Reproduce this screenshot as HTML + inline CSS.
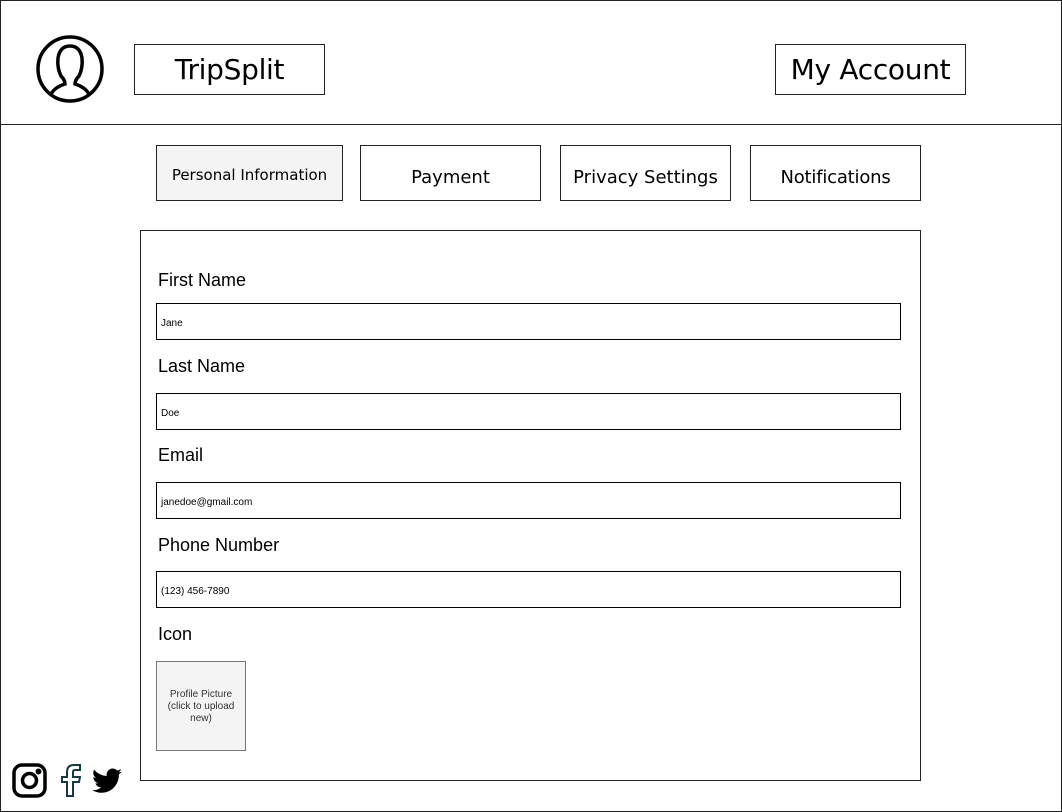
<!DOCTYPE html>
<html><head><style>
body{margin:0;width:1062px;height:812px;position:relative;background:#fff;overflow:hidden;font-family:"Liberation Sans",sans-serif}
.a{position:absolute;box-sizing:border-box;border:1.5px solid #222}
.dj{font-family:"DejaVu Sans",sans-serif;display:flex;align-items:center;justify-content:center;color:#000}
.lbl{position:absolute;font-size:18px;color:#000;left:158px}
.in{position:absolute;left:156px;width:745px;height:37px;box-sizing:border-box;border:1px solid #000;font-size:10px;padding-left:4px;padding-top:3px;display:flex;align-items:center}
</style></head><body>
<div class="a" style="left:0;top:0;width:1062px;height:812px"></div>
<div class="a" style="left:0;top:124px;width:1062px;height:0;border-width:1.5px 0 0 0"></div>
<svg style="position:absolute;left:35px;top:34px" width="70" height="70" viewBox="0 0 70 70" fill="none" stroke="#000" stroke-width="3.5">
<circle cx="35" cy="35" r="32"/>
<path d="M16 60 Q20 53 30 50 Q30 46 26 42 Q22 34 23 24 Q25 12 35 12 Q45 12 47 24 Q48 34 44 42 Q40 46 40 50 Q50 53 54 60"/>
</svg>
<div class="a dj" style="left:134px;top:44px;width:191px;height:51px;font-size:28px;letter-spacing:-0.3px">TripSplit</div>
<div class="a dj" style="left:775px;top:44px;width:191px;height:51px;font-size:28px;letter-spacing:-0.3px">My Account</div>
<div class="a dj" style="left:156px;top:145px;width:187px;height:56px;font-size:15px;background:#f4f4f4;padding-top:4px">Personal Information</div>
<div class="a dj" style="left:360px;top:145px;width:181px;height:56px;font-size:18px;padding-top:8px">Payment</div>
<div class="a dj" style="left:560px;top:145px;width:171px;height:56px;font-size:18px;padding-top:8px">Privacy Settings</div>
<div class="a dj" style="left:750px;top:145px;width:171px;height:56px;font-size:18px;padding-top:8px;letter-spacing:-0.2px">Notifications</div>
<div class="a" style="left:140px;top:230px;width:781px;height:551px"></div>
<div class="lbl" style="top:270px">First Name</div>
<div class="in" style="top:303px">Jane</div>
<div class="lbl" style="top:356px">Last Name</div>
<div class="in" style="top:393px">Doe</div>
<div class="lbl" style="top:445px">Email</div>
<div class="in" style="top:482px">janedoe@gmail.com</div>
<div class="lbl" style="top:535px">Phone Number</div>
<div class="in" style="top:571px">(123) 456-7890</div>
<div class="lbl" style="top:624px">Icon</div>
<div style="position:absolute;left:156px;top:661px;width:90px;height:90px;box-sizing:border-box;border:1px solid #777;background:#f4f4f4;font-size:10px;color:#333;text-align:center;display:flex;align-items:center;justify-content:center;line-height:12px;padding-top:2px">Profile Picture<br>(click to upload<br>new)</div>
<svg style="position:absolute;left:12px;top:763px" width="36" height="36" viewBox="0 0 36 36" fill="none" stroke="#000" stroke-width="3.5">
<rect x="2" y="2" width="31" height="31" rx="8"/><circle cx="17.5" cy="17.5" r="7"/><circle cx="26.5" cy="8.5" r="1.2" fill="#000"/>
</svg>
<svg style="position:absolute;left:59px;top:763px" width="24" height="34" viewBox="0 0 24 34" fill="none" stroke="#17393f" stroke-width="2">
<path d="M8 33 V19 H3 V14 H8 V9 Q8 2 15 2 H21 V7 H16 Q14 7 14 9 V14 H21 L20 19 H14 V33 Z"/>
</svg>
<svg style="position:absolute;left:92px;top:768px" width="30" height="26" viewBox="0 0 24 20">
<path fill="#000" d="M24 2.4a9.8 9.8 0 0 1-2.8.8A4.9 4.9 0 0 0 23.3.4a9.9 9.9 0 0 1-3.1 1.2A4.9 4.9 0 0 0 11.8 6 14 14 0 0 1 1.7.9a4.9 4.9 0 0 0 1.5 6.6A4.9 4.9 0 0 1 1 6.9a4.9 4.9 0 0 0 3.9 4.8 4.9 4.9 0 0 1-2.2.1 4.9 4.9 0 0 0 4.6 3.4A9.9 9.9 0 0 1 0 17.2 14 14 0 0 0 7.5 19.4c9 0 14-7.5 14-14v-.6A10 10 0 0 0 24 2.4z"/>
</svg>
</body></html>
